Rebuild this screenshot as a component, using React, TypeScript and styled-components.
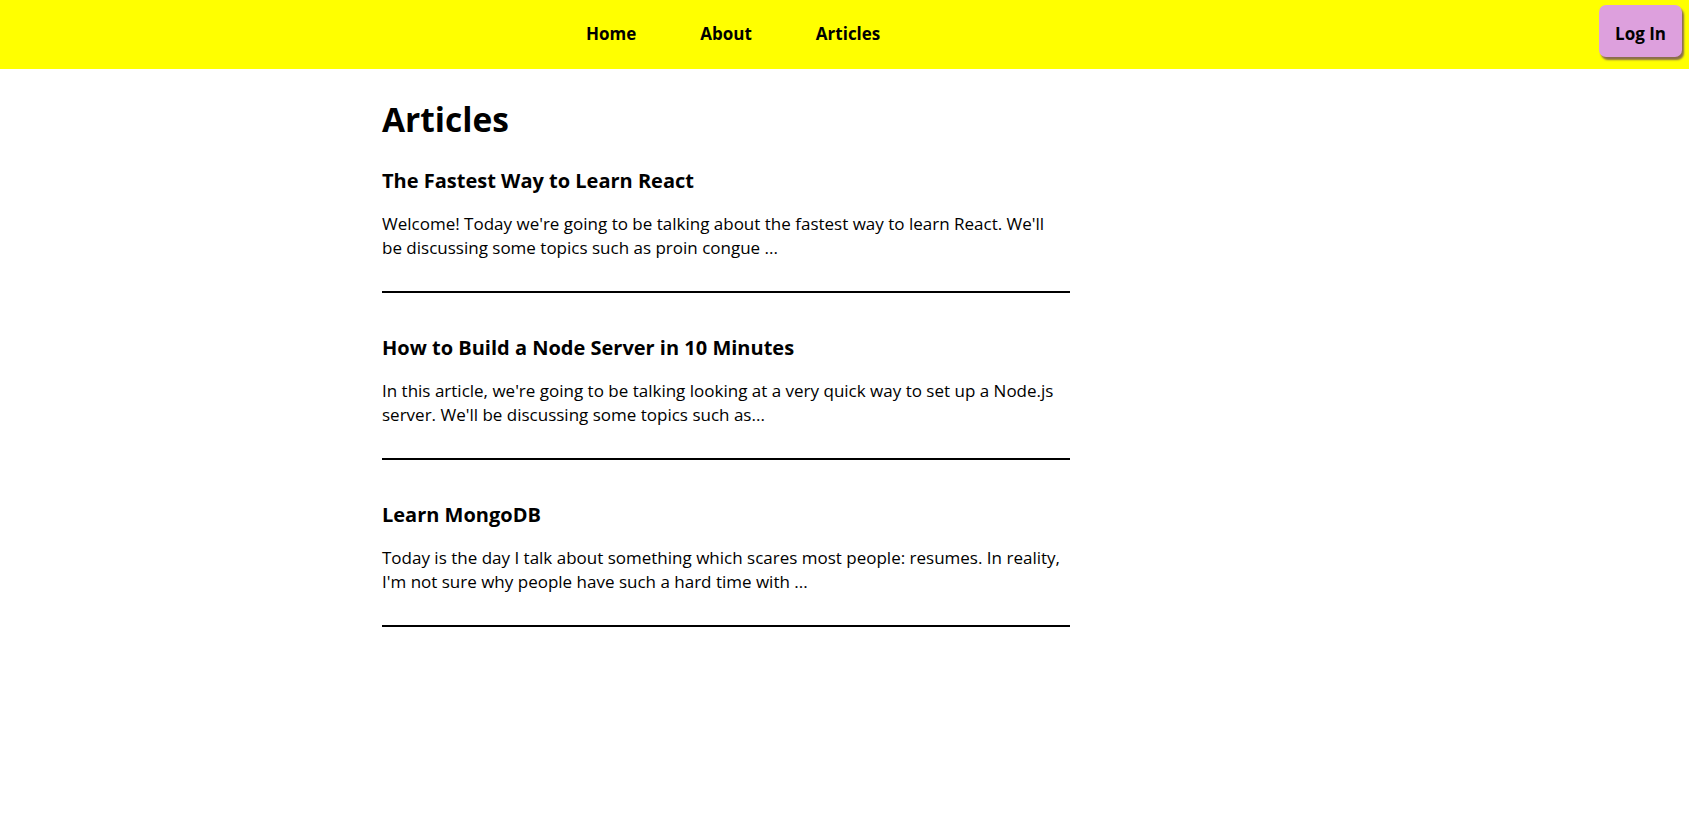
import React from "react";
import styled, { createGlobalStyle } from "styled-components";

const GlobalStyle = createGlobalStyle`
  html, body {
    margin: 0;
    padding: 0;
    background: #ffffff;
  }
  body {
    font-family: "Open Sans", "Noto Sans", sans-serif;
    color: #000000;
  }
  * { box-sizing: border-box; }
`;

const NavBar = styled.nav`
  height: 69px;
  background: #ffff00;
  display: flex;
  align-items: center;
  padding: 0 7px 2px 554px;
`;

const NavList = styled.ul`
  list-style: none;
  display: flex;
  margin: 0;
  padding: 0;
`;

const NavLink = styled.a`
  display: block;
  padding: 0 32px;
  font-size: 17px;
  font-weight: 700;
  color: #000;
  text-decoration: none;
  cursor: pointer;
`;

const LoginButton = styled.button`
  margin-left: auto;
  align-self: flex-start;
  margin-top: 5px;
  height: 52px;
  padding: 5px 16px 0;
  border: none;
  border-radius: 7px;
  background: #dda0dd;
  box-shadow: 2px 3px 2px rgba(100, 60, 100, 0.75);
  font-family: inherit;
  font-size: 17px;
  font-weight: 700;
  color: #000;
  cursor: pointer;
`;

const Main = styled.main`
  padding: 28px 0 40px 382px;
  width: calc(382px + 688px);
`;

const PageTitle = styled.h1`
  margin: 0 0 26px;
  font-size: 33.5px;
  line-height: 44px;
  font-weight: 700;
`;

const ArticleList = styled.div`
  display: flex;
  flex-direction: column;
  gap: 41px;
`;

const ArticleCard = styled.article`
  padding-bottom: 31px;
  border-bottom: 2px solid #000;
`;

const ArticleTitle = styled.h3`
  margin: 0 0 17px;
  font-size: 20px;
  line-height: 28px;
  font-weight: 700;
`;

const Excerpt = styled.p`
  margin: 0;
  max-width: 682px;
  font-size: 17px;
  line-height: 24px;
`;

const articles = [
  {
    title: "The Fastest Way to Learn React",
    excerpt:
      "Welcome! Today we're going to be talking about the fastest way to learn React. We'll be discussing some topics such as proin congue ...",
  },
  {
    title: "How to Build a Node Server in 10 Minutes",
    excerpt:
      "In this article, we're going to be talking looking at a very quick way to set up a Node.js server. We'll be discussing some topics such as...",
  },
  {
    title: "Learn MongoDB",
    excerpt:
      "Today is the day I talk about something which scares most people: resumes. In reality, I'm not sure why people have such a hard time with ...",
  },
];

export default function App() {
  return (
    <>
      <GlobalStyle />
      <NavBar>
        <NavList>
          <li><NavLink>Home</NavLink></li>
          <li><NavLink>About</NavLink></li>
          <li><NavLink>Articles</NavLink></li>
        </NavList>
        <LoginButton>Log In</LoginButton>
      </NavBar>
      <Main>
        <PageTitle>Articles</PageTitle>
        <ArticleList>
          {articles.map((a) => (
            <ArticleCard key={a.title}>
              <ArticleTitle>{a.title}</ArticleTitle>
              <Excerpt>{a.excerpt}</Excerpt>
            </ArticleCard>
          ))}
        </ArticleList>
      </Main>
    </>
  );
}
